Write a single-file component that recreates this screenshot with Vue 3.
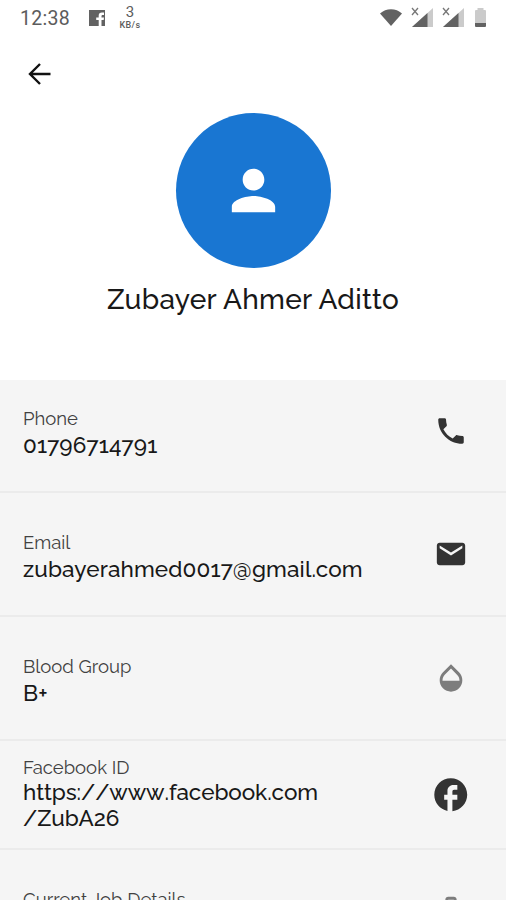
<script setup>
import { ref } from 'vue';

const name = ref('Zubayer Ahmer Aditto');

const details = ref([
  { id: 'phone', label: 'Phone', lines: ['01796714791'] },
  { id: 'email', label: 'Email', lines: ['zubayerahmed0017@gmail.com'] },
  { id: 'blood', label: 'Blood Group', lines: ['B+'] },
  { id: 'facebook', label: 'Facebook ID', lines: ['https://www.facebook.com', '/ZubA26'] },
  { id: 'job', label: 'Current Job Details', lines: [] },
]);

const icons = {
  phone:
    'M6.62 10.79c1.44 2.83 3.76 5.14 6.59 6.59l2.2-2.2c.27-.27.67-.36 1.02-.24 1.12.37 2.33.57 3.57.57.55 0 1 .45 1 1V20c0 .55-.45 1-1 1-9.39 0-17-7.61-17-17 0-.55.45-1 1-1h3.5c.55 0 1 .45 1 1 0 1.25.2 2.45.57 3.57.11.35.03.74-.25 1.02l-2.2 2.2z',
  email:
    'M20 4H4c-1.1 0-1.99.9-1.99 2L2 18c0 1.1.9 2 2 2h16c1.1 0 2-.9 2-2V6c0-1.1-.9-2-2-2zm0 4l-8 5-8-5V6l8 5 8-5v2z',
  blood:
    'M17.66 8L12 2.35 6.34 8C4.78 9.56 4 11.64 4 13.64s.78 4.11 2.34 5.67 3.61 2.35 5.66 2.35 4.1-.79 5.66-2.35S20 15.64 20 13.64 19.22 9.56 17.66 8zM6 14c.01-2 .62-3.27 1.76-4.4L12 5.27l4.24 4.38C17.38 10.77 17.99 12 18 14H6z',
  facebook:
    'M22 12c0-5.52-4.48-10-10-10S2 6.48 2 12c0 4.84 3.44 8.87 8 9.8V15H8v-3h2V9.5C10 7.57 11.57 6 13.5 6H16v3h-2c-.55 0-1 .45-1 1v2h3v3h-3v6.95c5.05-.5 9-4.76 9-9.95z',
  job:
    'M14 6V4h-4v2h4zM4 8v11h16V8H4zm16-2c1.11 0 2 .89 2 2v11c0 1.11-.89 2-2 2H4c-1.11 0-2-.89-2-2l.01-11c0-1.11.88-2 1.99-2h4V4c0-1.11.89-2 2-2h4c1.11 0 2 .89 2 2v2h4z',
};
</script>

<template>
  <div class="profile-page">
    <header class="status-bar">
      <span class="clock">12:38</span>
      <svg class="status-facebook" viewBox="0 0 16 16">
        <path d="M0 0h16v16h-3.500V10h2.200l.3-2.400h-2.500V6.200c0-.8.4-1.200 1.300-1.200H15V2.600h-2c-2.200 0-3.300 1.200-3.300 3.200v1.800H7.200V10h2.500v6H0z" />
      </svg>
      <div class="net-speed">
        <span class="speed-value">3</span>
        <span class="speed-unit">KB/s</span>
      </div>
      <div class="status-right">
        <svg class="wifi" viewBox="0 0 22 17">
          <path d="M0 4.500C6-1.200 16-1.200 22 4.500L11 17z" />
        </svg>
        <svg v-for="n in 2" :key="n" class="signal" viewBox="0 0 22 20">
          <path class="faint" d="M22 1v19H1z" />
          <path d="M16.500 6v14H1z" />
          <path class="cross" d="M1 1l6 7M7 1L1 8" />
        </svg>
        <svg class="battery" viewBox="0 0 11 19">
          <path class="faint" d="M2.500 0h6v2H10q1 0 1 1v13H0V3q0-1 1-1h1.500z" />
          <path d="M0 15h11v3q0 1-1 1H1q-1 0-1-1z" />
        </svg>
      </div>
    </header>

    <nav class="toolbar">
      <svg class="back" viewBox="0 0 24 24">
        <path d="M22.500 12H2M12 2L2 12l10 10" />
      </svg>
    </nav>

    <section class="profile">
      <div class="avatar">
        <svg viewBox="0 0 24 24">
          <path d="M12 12c2.210 0 4-1.790 4-4s-1.790-4-4-4-4 1.790-4 4 1.790 4 4 4zm0 2c-2.670 0-8 1.340-8 4v2h16v-2c0-2.660-5.330-4-8-4z" />
        </svg>
      </div>
      <h1>{{ name }}</h1>
    </section>

    <main class="details">
      <div v-for="item in details" :key="item.id" class="detail-row" :class="item.id">
        <div class="detail-text">
          <p class="label">{{ item.label }}</p>
          <p v-for="line in item.lines" :key="line" class="value">{{ line }}</p>
        </div>
        <div class="detail-icon">
          <svg viewBox="0 0 24 24">
            <path :d="icons[item.id]" />
          </svg>
        </div>
      </div>
    </main>
  </div>
</template>

<style>
body {
  background: #fff;
  overflow: hidden;
}
</style>

<style scoped>
.profile-page {
  width: 506px;
  height: 900px;
  overflow: hidden;
  background: #fff;
  font-family: Raleway, Lato, sans-serif;
  color: #181818;
}

.status-bar {
  display: flex;
  align-items: center;
  height: 36px;
  padding: 0 20px;
  font-family: Roboto, sans-serif;
  color: #5c5c5c;
  fill: #626262;
}

.clock {
  width: 69px;
  font-size: 19.5px;
  letter-spacing: 0.3px;
}

.status-facebook {
  width: 16px;
  height: 16px;
  margin-bottom: 1px;
}

.net-speed {
  display: flex;
  flex-direction: column;
  align-items: center;
  width: 22px;
  margin: 0 0 1px 14px;
}

.speed-value {
  font-size: 15px;
  line-height: 15px;
}

.speed-unit {
  font-size: 9px;
  font-weight: 500;
  line-height: 10px;
  letter-spacing: 0.4px;
}

.status-right {
  display: flex;
  align-items: center;
  margin: 0 0 2px auto;
}

.wifi {
  width: 22px;
  height: 17px;
}

.signal {
  width: 22px;
  height: 20px;
  margin-left: 9px;
}

.battery {
  width: 11px;
  height: 19px;
  margin-left: 11px;
}

.faint {
  fill: #cbcbcb;
}

.cross {
  fill: none;
  stroke: #777;
  stroke-width: 1.3;
}

.toolbar {
  display: flex;
  align-items: center;
  height: 75px;
  padding-left: 28px;
}

.back {
  width: 24px;
  height: 24px;
  fill: none;
  stroke: #111;
  stroke-width: 2.4;
}

.profile {
  display: flex;
  flex-direction: column;
  align-items: center;
  height: 267px;
  padding-top: 2px;
}

.avatar {
  display: flex;
  align-items: center;
  justify-content: center;
  width: 155px;
  height: 155px;
  border-radius: 50%;
  background: #1976d2;
}

.avatar svg {
  width: 65px;
  height: 65px;
  fill: #fff;
}

h1 {
  margin: 15px 0 0;
  font-size: 28px;
  font-weight: 500;
  line-height: 34px;
  letter-spacing: 0.3px;
  white-space: nowrap;
}

.details {
  background: #f5f5f5;
}

.detail-row {
  display: flex;
  align-items: center;
  box-sizing: border-box;
  height: 124px;
  padding: 0 38.5px 0 23px;
  border-bottom: 2px solid #ebebeb;
}

.detail-row.phone {
  height: 113px;
  padding-bottom: 10px;
}

.detail-row.facebook {
  height: 109px;
}

.detail-text {
  flex: 1;
  padding-top: 5px;
}

.label,
.value {
  margin: 0;
  white-space: nowrap;
}

.label {
  font-size: 18.5px;
  line-height: 26px;
  color: #414141;
}

.value {
  font-size: 22.5px;
  font-weight: 500;
  line-height: 27px;
  letter-spacing: 0.13px;
}

.phone .detail-text {
  padding-top: 4px;
}

.facebook .detail-text {
  padding: 0 0 1px;
}

.facebook .label {
  line-height: 22px;
}

.facebook .value {
  line-height: 26px;
  letter-spacing: -0.1px;
  font-kerning: none;
}

.job .detail-text {
  padding-bottom: 28px;
}

.detail-icon {
  display: flex;
  justify-content: center;
  width: 34px;
}

.detail-icon svg {
  flex: none;
  width: 34px;
  height: 34px;
  fill: #333;
}

.blood .detail-icon svg,
.job .detail-icon svg {
  fill: #7d7d7d;
}

.facebook .detail-icon svg {
  width: 39.5px;
  height: 39.5px;
}
</style>
